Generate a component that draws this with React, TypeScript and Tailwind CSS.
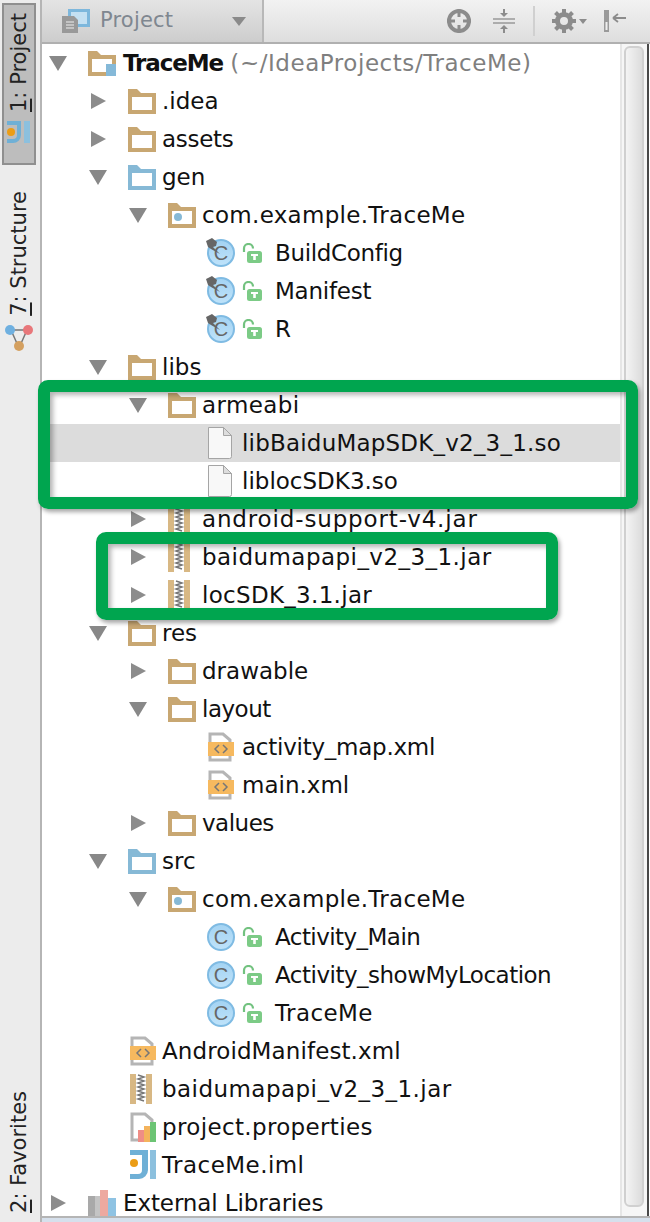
import type { ReactNode } from "react";

const FONT = "font-['DejaVu_Sans',sans-serif]";

type IconName =
  | "module" | "folder" | "source" | "package" | "genClass" | "javaClass"
  | "file" | "jar" | "xml" | "props" | "iml" | "libs";

type Node = {
  d: number;
  label: string;
  icon: IconName;
  arrow?: "open" | "closed";
  selected?: boolean;
  track?: string;
};

// track: the original font is Lucida Grande, so widths are nudged row by row
const rows: Node[] = [
  { d: 1, label: ".idea", icon: "folder", arrow: "closed" },
  { d: 1, label: "assets", icon: "folder", arrow: "closed", track: "tracking-[-0.3px]" },
  { d: 1, label: "gen", icon: "source", arrow: "open" },
  { d: 2, label: "com.example.TraceMe", icon: "package", arrow: "open", track: "tracking-[0.3px]" },
  { d: 3, label: "BuildConfig", icon: "genClass", track: "tracking-[-0.35px]" },
  { d: 3, label: "Manifest", icon: "genClass", track: "tracking-[-0.25px]" },
  { d: 3, label: "R", icon: "genClass" },
  { d: 1, label: "libs", icon: "folder", arrow: "open" },
  { d: 2, label: "armeabi", icon: "folder", arrow: "open", track: "tracking-[0.4px]" },
  { d: 3, label: "libBaiduMapSDK_v2_3_1.so", icon: "file", selected: true, track: "tracking-[0.2px]" },
  { d: 3, label: "liblocSDK3.so", icon: "file" },
  { d: 2, label: "android-support-v4.jar", icon: "jar", arrow: "closed", track: "tracking-[0.85px]" },
  { d: 2, label: "baidumapapi_v2_3_1.jar", icon: "jar", arrow: "closed", track: "tracking-[0.45px]" },
  { d: 2, label: "locSDK_3.1.jar", icon: "jar", arrow: "closed", track: "tracking-[0.3px]" },
  { d: 1, label: "res", icon: "folder", arrow: "open" },
  { d: 2, label: "drawable", icon: "folder", arrow: "closed" },
  { d: 2, label: "layout", icon: "folder", arrow: "open", track: "tracking-[-0.5px]" },
  { d: 3, label: "activity_map.xml", icon: "xml", track: "tracking-[-0.25px]" },
  { d: 3, label: "main.xml", icon: "xml" },
  { d: 2, label: "values", icon: "folder", arrow: "closed", track: "tracking-[-0.5px]" },
  { d: 1, label: "src", icon: "source", arrow: "open" },
  { d: 2, label: "com.example.TraceMe", icon: "package", arrow: "open", track: "tracking-[0.3px]" },
  { d: 3, label: "Activity_Main", icon: "javaClass", track: "tracking-[-0.55px]" },
  { d: 3, label: "Activity_showMyLocation", icon: "javaClass", track: "tracking-[-0.5px]" },
  { d: 3, label: "TraceMe", icon: "javaClass", track: "tracking-[0.4px]" },
  { d: 1, label: "AndroidManifest.xml", icon: "xml", track: "tracking-[0.1px]" },
  { d: 1, label: "baidumapapi_v2_3_1.jar", icon: "jar", track: "tracking-[0.45px]" },
  { d: 1, label: "project.properties", icon: "props", track: "tracking-[0.35px]" },
  { d: 1, label: "TraceMe.iml", icon: "iml", track: "tracking-[0.45px]" },
];

function Arrow({ kind }: { kind?: "open" | "closed" }) {
  if (!kind) return null;
  return (
    <svg width="20" height="20" viewBox="0 0 20 20">
      {kind === "open" ? <path d="M1 3h18l-9 15z" fill="#888" /> : <path d="M3 2l15 8-15 8z" fill="#8c8c8c" />}
    </svg>
  );
}

function Folder({ color = "#c8a772", children }: { color?: string; children?: ReactNode }) {
  return (
    <svg width="28" height="25" viewBox="0 0 28 25">
      <path d="M0 0h9l4 4h15v21H0z" fill={color} />
      <rect x="4" y="8" width="20" height="13" fill="#fff" />
      {children}
    </svg>
  );
}

function ClassIcon({ pin }: { pin: boolean }) {
  return (
    <span className="flex items-center">
      <svg width="30" height="30" viewBox="0 0 30 30" className="-ml-0.5">
        <defs>
          <linearGradient id="classFill" x1="0" y1="0" x2="0" y2="1">
            <stop offset="0" stopColor="#a3d3f3" />
            <stop offset="1" stopColor="#bfe3fa" />
          </linearGradient>
        </defs>
        <circle cx="15" cy="15" r="13" fill="url(#classFill)" stroke="#7fbbe3" strokeWidth="2" />
        <text x="15" y="22" textAnchor="middle" fontSize="20" fill="#666" fontFamily="Liberation Sans, sans-serif">C</text>
        {pin && <path d="M0 3l6-3 5 4-1 4-3 1 7 7-9-5-3-2z" fill="#666" />}
      </svg>
      <svg width="20" height="20" viewBox="0 0 20 20" className="ml-[6px]">
        <path d="M2 9V5.5a4.5 4.5 0 0 1 9 0" fill="none" stroke="#72c27f" strokeWidth="2.2" />
        <rect x="5" y="8" width="15" height="12" rx="2.5" fill="#7ccb86" />
        <path d="M9 11h7v2h-2.2v4h-2.6v-4H9z" fill="#fff" />
      </svg>
    </span>
  );
}

function Icon({ name }: { name: IconName }) {
  switch (name) {
    case "module":
      return (
        <Folder>
          <rect x="18" y="13" width="12" height="12" fill="#85b9d8" />
        </Folder>
      );
    case "folder":
      return <Folder />;
    case "source":
      return <Folder color="#86b9d6" />;
    case "package":
      return (
        <Folder>
          <circle cx="10" cy="14" r="4" fill="#86b9d6" />
        </Folder>
      );
    case "genClass":
      return <ClassIcon pin />;
    case "javaClass":
      return <ClassIcon pin={false} />;
    case "file":
      return (
        <svg width="24" height="32" viewBox="0 0 24 32">
          <path d="M.5.5h15l8 8v21a2 2 0 0 1-2 2H.5z" fill="#f8f8f8" stroke="#a5a5a5" />
          <path d="M15.5.5v8h8z" fill="#ddd" stroke="#a5a5a5" />
        </svg>
      );
    case "jar":
      return (
        <svg width="22" height="30" viewBox="0 0 22 30">
          <rect width="22" height="30" fill="#d8b884" />
          <rect x="6" width="10" height="30" fill="#fff" />
          <path d="M8 1l6 2-6 2 6 2-6 2 6 2-6 2 6 2-6 2 6 2-6 2 6 2-6 2 6 2" fill="none" stroke="#777" strokeWidth="1.5" />
        </svg>
      );
    case "xml":
      return (
        <svg width="26" height="30" viewBox="0 0 26 30">
          <path d="M2 2h13l7 6v20H2z" fill="#fff" stroke="#b5b5b5" strokeWidth="3" />
          <rect y="10" width="26" height="14" fill="#f6b95f" />
          <path d="M11 13l-4 4 4 4M15 13l4 4-4 4" fill="none" stroke="#777" strokeWidth="1.5" />
        </svg>
      );
    case "props":
      return (
        <svg width="26" height="30" viewBox="0 0 26 30">
          <path d="M2 2h13l7 6v20H2z" fill="#fff" stroke="#b5b5b5" strokeWidth="3" />
          <rect x="8" y="18" width="6" height="12" fill="#ef8d86" />
          <rect x="14" y="14" width="6" height="16" fill="#f4b35c" />
          <rect x="20" y="10" width="6" height="20" fill="#6cc474" />
        </svg>
      );
    case "iml":
      return (
        <svg width="26" height="30" viewBox="0 0 26 30">
          <path d="M0 0h18v20a9 9 0 0 1-9 9H0v-5h8a4 4 0 0 0 4-4V5H0z" fill="#6fb0d6" />
          <rect x="20" width="6" height="29" fill="#8cc0de" />
          <circle cx="4" cy="13" r="4" fill="#eb9d16" />
        </svg>
      );
    case "libs":
      return (
        <svg width="30" height="26" viewBox="0 0 30 26">
          <rect y="6" width="7" height="20" fill="#a9a9a9" />
          <rect x="7" y="6" width="5" height="20" fill="#c4c4c4" />
          <rect x="12" width="8" height="26" fill="#eda9a0" />
          <rect x="20" y="8" width="8" height="18" fill="#8fc3e3" />
        </svg>
      );
  }
}

function Row({ node }: { node: Node }) {
  const indent = ["pl-[6px]", "pl-[46px]", "pl-[86px]", "pl-[126px]"][node.d];
  const isClass = node.icon === "genClass" || node.icon === "javaClass";
  // leaf rows directly under a depth-1 folder have their icon nudged right
  const nudged = !node.arrow && node.d === 1;
  return (
    <div className={`flex h-[38px] items-center ${indent} ${node.selected ? "bg-[#dcdcdc]" : ""}`}>
      <span className="flex w-[40px] shrink-0 items-center">
        <Arrow kind={node.arrow} />
      </span>
      <span className={`flex shrink-0 items-center ${isClass ? "w-[67px]" : "w-[34px]"} ${nudged ? "pl-[2px]" : ""}`}>
        <Icon name={node.icon} />
      </span>
      <span className={`whitespace-nowrap text-[23px] leading-none text-[#111] ${node.track ?? ""}`}>{node.label}</span>
    </div>
  );
}

function SideTab({ num, label, active, icon }: { num: string; label: string; active?: boolean; icon?: ReactNode }) {
  return (
    <div className={`flex w-[34px] flex-col items-center ${active ? "h-[162px] border-2 border-[#8f8f8f] bg-[#bdbdbd] pt-[8px]" : "pt-[26px]"}`}>
      <span className="rotate-180 whitespace-nowrap text-[21px] leading-[34px] text-[#222] [writing-mode:vertical-rl]">
        <span className="underline">{num}</span>: {label}
      </span>
      <span className="mt-[8px]">{icon}</span>
    </div>
  );
}

export default function App() {
  return (
    <div className={`flex h-[1222px] w-[650px] overflow-hidden bg-white ${FONT}`}>
      <aside className="flex w-[42px] shrink-0 flex-col border-r-[2px] border-[#b5b5b5] bg-[#ececec] pl-[2px] pt-[3px]">
        <SideTab
          num="1"
          label="Project"
          active
          icon={
            <svg width="24" height="24" viewBox="0 0 24 24">
              <path d="M0 1h14v14a8 8 0 0 1-8 8H0v-4h6a4 4 0 0 0 4-4V5H0z" fill="#6fb0d6" />
              <rect x="17" y="1" width="6" height="22" fill="#8cc0de" />
              <circle cx="4" cy="12" r="4" fill="#eb9d16" />
            </svg>
          }
        />
        <SideTab
          num="7"
          label="Structure"
          icon={
            <svg width="28" height="28" viewBox="0 0 28 28">
              <path d="M6 6h16M6 6l8 18M22 6l-8 18" stroke="#777" strokeWidth="1.5" fill="none" />
              <circle cx="5" cy="6" r="5" fill="#6fb0e0" />
              <circle cx="23" cy="6" r="5" fill="#e8777a" />
              <circle cx="14" cy="22" r="5" fill="#d4a060" />
            </svg>
          }
        />
        <div className="flex-1" />
        <div className="flex w-[34px] justify-center pb-[9px]">
          <span className="rotate-180 whitespace-nowrap text-[21px] leading-[34px] text-[#222] [writing-mode:vertical-rl]">
            <span className="underline">2</span>: Favorites
          </span>
        </div>
      </aside>

      <main className="relative flex min-w-0 flex-1 flex-col">
        <header className="flex h-[44px] shrink-0 items-stretch border-b-[2px] border-[#b0b0b0] bg-gradient-to-b from-[#f2f2f2] to-[#dedede]">
          <div className="flex w-[222px] items-center border-r-[2px] border-[#b8b8b8] bg-gradient-to-b from-[#e4e4e4] to-[#cdcdcd] pl-[20px] pr-[8px]">
            <svg width="28" height="24" viewBox="0 0 28 24">
              <rect x="6" width="22" height="18" fill="#7db7dc" />
              <rect x="9" y="3" width="16" height="12" fill="#c4e0f2" />
              <path d="M0 7h12l4 4v13H0z" fill="#999" />
              <path d="M4 13h8M4 16h8M4 19h8" stroke="#eee" strokeWidth="1" />
            </svg>
            <span className="ml-[10px] flex-1 text-[21px] tracking-[0.2px] text-[#7f8790]">Project</span>
            <svg width="14" height="9" viewBox="0 0 14 9" className="mr-[8px]">
              <path d="M0 0h14l-7 9z" fill="#8a8a8a" />
            </svg>
          </div>
          <div className="flex flex-1 items-center justify-end pr-[23px]">
            <svg width="26" height="26" viewBox="0 0 26 26">
              <circle cx="13" cy="13" r="10" fill="none" stroke="#8c8c8c" strokeWidth="4" />
              <path d="M13 1v8M13 17v8M1 13h8M17 13h8" stroke="#8c8c8c" strokeWidth="3" />
            </svg>
            <svg width="24" height="26" viewBox="0 0 24 26" className="ml-[20px]">
              <path d="M1 11h22M1 15h22" stroke="#999" strokeWidth="1.5" />
              <path d="M12 1v5M12 20v5" stroke="#8c8c8c" strokeWidth="2" />
              <path d="M8 5h8l-4 4zM8 21h8l-4-4z" fill="#8c8c8c" />
            </svg>
            <span className="ml-[17px] h-[30px] w-[2px] bg-[#d0d0d0]" />
            <svg width="26" height="26" viewBox="0 0 26 26" className="ml-[16px]">
              <circle cx="13" cy="13" r="6.5" fill="none" stroke="#8c8c8c" strokeWidth="5" />
              <path d="M13 1v24M1 13h24M4.5 4.5l17 17M21.5 4.5l-17 17" stroke="#8c8c8c" strokeWidth="4" strokeDasharray="4.5 15 4.5" />
            </svg>
            <svg width="8" height="5" viewBox="0 0 8 5" className="ml-[2px]">
              <path d="M0 0h8L4 5z" fill="#8c8c8c" />
            </svg>
            <svg width="24" height="24" viewBox="0 0 24 24" className="ml-[16px]">
              <rect x="1" y="1" width="5" height="22" fill="#9a9a9a" />
              <rect x="2.5" y="13" width="2" height="8" fill="#eee" />
              <path d="M10 9h13M10 9l5-4M10 9l5 4" stroke="#8c8c8c" strokeWidth="1.8" fill="none" />
            </svg>
          </div>
        </header>

        <div className="flex min-h-0 flex-1">
          <div className="min-w-0 flex-1 overflow-hidden">
            <div className="flex h-[38px] items-center pl-[6px]">
              <span className="flex w-[40px] shrink-0 items-center">
                <Arrow kind="open" />
              </span>
              <span className="flex w-[35px] shrink-0 items-center">
                <Icon name="module" />
              </span>
              <span className="whitespace-nowrap text-[23px] leading-none">
                <b className="tracking-[-1.1px] text-[#111]">TraceMe</b>{" "}
                <span className="tracking-[0.55px] text-[#7f7f7f]">(~/IdeaProjects/TraceMe)</span>
              </span>
            </div>
            {rows.map((n, i) => (
              <Row key={i} node={n} />
            ))}
            <div className="flex h-[38px] items-center pl-[6px]">
              <span className="flex w-[40px] shrink-0 items-center">
                <Arrow kind="closed" />
              </span>
              <span className="flex w-[35px] shrink-0 items-center">
                <Icon name="libs" />
              </span>
              <span className="whitespace-nowrap text-[23px] leading-none tracking-[-0.1px] text-[#111]">External Libraries</span>
            </div>
          </div>
          <div className="w-[29px] shrink-0 border-l-[2px] border-r-[2px] border-l-[#e6e6e6] border-r-[#484848] bg-[#f6f6f6] pb-[9px] pl-[2px] pr-[3px] pt-[2px]">
            <div className="h-full rounded-[6px] border-2 border-[#d0d0d0] bg-gradient-to-r from-[#f4f4f4] to-[#dcdcdc]" />
          </div>
          <div className="w-px shrink-0 bg-white" />
        </div>
        <div className="h-[6px] shrink-0 border-t-[2px] border-[#b5b5b5] bg-[#d6e0ec]" />

        <div className="absolute left-[-4px] top-[380px] h-[129px] w-[600px] rounded-[10px] border-[12px] border-[#00a54f] shadow-[2px_3px_4px_rgba(0,0,0,0.35),inset_3px_3px_5px_rgba(0,0,0,0.3)]" />
        <div className="absolute left-[54px] top-[532px] h-[88px] w-[462px] rounded-[10px] border-[12px] border-[#00a54f] shadow-[2px_3px_4px_rgba(0,0,0,0.35),inset_3px_3px_5px_rgba(0,0,0,0.3)]" />
      </main>
    </div>
  );
}
